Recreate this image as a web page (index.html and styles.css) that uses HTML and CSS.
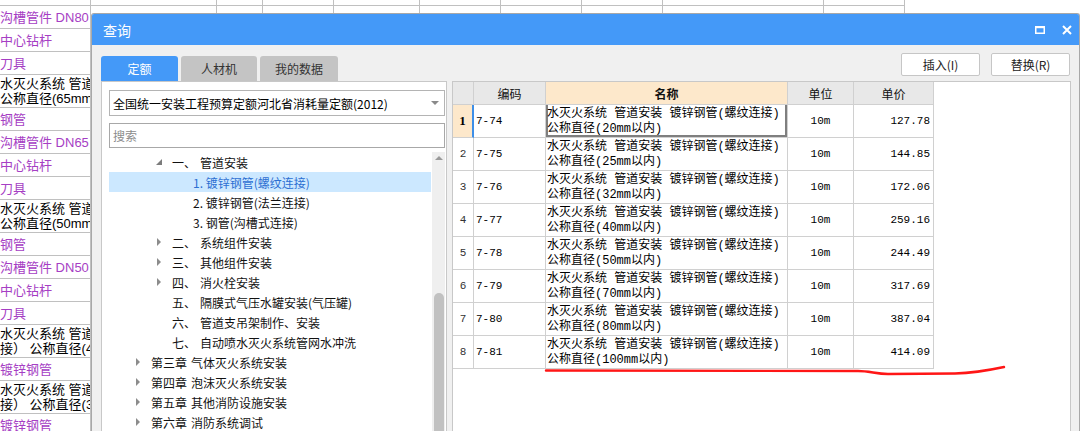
FILE: index.html
```html
<!DOCTYPE html>
<html lang="zh-CN">
<head>
<meta charset="utf-8">
<title>查询</title>
<link rel="stylesheet" href="styles.css">
</head>
<body>
<div class="sheet">
  <div class="namecol">
    <div class="srow top"></div>
    <div class="srow one purple"><span>沟槽管件 DN80</span></div>
    <div class="srow one purple"><span>中心钻杆</span></div>
    <div class="srow one purple"><span>刀具</span></div>
    <div class="srow two"><span>水灭火系统 管道安</span><span>公称直径(65mm以</span></div>
    <div class="srow one purple"><span>钢管</span></div>
    <div class="srow one purple"><span>沟槽管件 DN65</span></div>
    <div class="srow one purple"><span>中心钻杆</span></div>
    <div class="srow one purple"><span>刀具</span></div>
    <div class="srow two"><span>水灭火系统 管道安</span><span>公称直径(50mm以</span></div>
    <div class="srow one purple"><span>钢管</span></div>
    <div class="srow one purple"><span>沟槽管件 DN50</span></div>
    <div class="srow one purple"><span>中心钻杆</span></div>
    <div class="srow one purple"><span>刀具</span></div>
    <div class="srow two"><span>水灭火系统 管道安</span><span>接） 公称直径(40m</span></div>
    <div class="srow one purple"><span>镀锌钢管</span></div>
    <div class="srow two"><span>水灭火系统 管道安</span><span>接） 公称直径(32m</span></div>
    <div class="srow one purple"><span>镀锌钢管</span></div>
  </div>
  <div class="gcol g1"><div class="gtop"></div></div>
  <div class="gcol g2"><div class="gtop"></div></div>
  <div class="gcol g3"><div class="gtop"></div></div>
  <div class="gcol g4"><div class="gtop"></div></div>
  <div class="gcol g5"><div class="gtop"></div></div>
  <div class="gcol g6"><div class="gtop"></div></div>
  <div class="gcol g7"><div class="gtop"></div></div>
  <div class="gcol g8"><div class="gtop"></div></div>
  <div class="gcol g9"><div class="gtop"></div></div>
</div>

<div class="dialog">
  <div class="titlebar">
    <span class="title">查询</span>
    <div class="win-btns">
      <svg class="ico-max" width="10" height="8" viewBox="0 0 10 8"><rect x="0.75" y="1" width="8.5" height="6.25" fill="none" stroke="#fff" stroke-width="1.5"/><rect x="0" y="0" width="10" height="2.2" fill="#fff"/></svg>
      <svg class="ico-close" width="10" height="10" viewBox="0 0 10 10"><path d="M1 1L9 9M9 1L1 9" stroke="#fff" stroke-width="2" fill="none"/></svg>
    </div>
  </div>
  <div class="dlg-body">
    <div class="toprow">
      <div class="tabs">
        <div class="tab active t1">定额</div>
        <div class="tab t2">人材机</div>
        <div class="tab t3">我的数据</div>
      </div>
      <div class="actions">
        <button class="btn">插入(I)</button>
        <button class="btn">替换(R)</button>
      </div>
    </div>
    <div class="panels">
      <div class="left-panel">
        <div class="combo"><span>全国统一安装工程预算定额河北省消耗量定额(2012)</span><i class="combo-arrow"></i></div>
        <div class="search">搜索</div>
        <div class="tree-wrap">
          <div class="tree">
            <div class="node l2"><i class="tw open"></i><span class="num">一、</span>管道安装</div>
            <div class="node l3 sel">1. 镀锌钢管(螺纹连接)</div>
            <div class="node l3">2. 镀锌钢管(法兰连接)</div>
            <div class="node l3">3. 钢管(沟槽式连接)</div>
            <div class="node l2"><i class="tw closed"></i><span class="num">二、</span>系统组件安装</div>
            <div class="node l2"><i class="tw closed"></i><span class="num">三、</span>其他组件安装</div>
            <div class="node l2"><i class="tw closed"></i><span class="num">四、</span>消火栓安装</div>
            <div class="node l2"><i class="tw"></i><span class="num">五、</span>隔膜式气压水罐安装(气压罐)</div>
            <div class="node l2"><i class="tw"></i><span class="num">六、</span>管道支吊架制作、安装</div>
            <div class="node l2"><i class="tw"></i><span class="num">七、</span>自动喷水灭火系统管网水冲洗</div>
            <div class="node l1"><i class="tw closed"></i><span class="chap">第三章</span>气体灭火系统安装</div>
            <div class="node l1"><i class="tw closed"></i><span class="chap">第四章</span>泡沫灭火系统安装</div>
            <div class="node l1"><i class="tw closed"></i><span class="chap">第五章</span>其他消防设施安装</div>
            <div class="node l1"><i class="tw closed"></i><span class="chap">第六章</span>消防系统调试</div>
          </div>
          <div class="vscroll"><i class="up"></i><div class="thumb"></div></div>
        </div>
      </div>
      <div class="right-panel">
        <div class="grid">
          <div class="grow ghead">
            <div></div>
            <div>编码</div>
            <div class="hname">名称</div>
            <div>单位</div>
            <div>单价</div>
          </div>
          <div class="grow gdata current">
            <div class="rn">1</div>
            <div class="code">7-74</div>
            <div class="name"><span>水灭火系统 管道安装 镀锌钢管(螺纹连接)</span><span>公称直径(20mm以内)</span></div>
            <div class="unit">10m</div>
            <div class="price">127.78</div>
          </div>
          <div class="grow gdata">
            <div class="rn">2</div>
            <div class="code">7-75</div>
            <div class="name"><span>水灭火系统 管道安装 镀锌钢管(螺纹连接)</span><span>公称直径(25mm以内)</span></div>
            <div class="unit">10m</div>
            <div class="price">144.85</div>
          </div>
          <div class="grow gdata">
            <div class="rn">3</div>
            <div class="code">7-76</div>
            <div class="name"><span>水灭火系统 管道安装 镀锌钢管(螺纹连接)</span><span>公称直径(32mm以内)</span></div>
            <div class="unit">10m</div>
            <div class="price">172.06</div>
          </div>
          <div class="grow gdata">
            <div class="rn">4</div>
            <div class="code">7-77</div>
            <div class="name"><span>水灭火系统 管道安装 镀锌钢管(螺纹连接)</span><span>公称直径(40mm以内)</span></div>
            <div class="unit">10m</div>
            <div class="price">259.16</div>
          </div>
          <div class="grow gdata">
            <div class="rn">5</div>
            <div class="code">7-78</div>
            <div class="name"><span>水灭火系统 管道安装 镀锌钢管(螺纹连接)</span><span>公称直径(50mm以内)</span></div>
            <div class="unit">10m</div>
            <div class="price">244.49</div>
          </div>
          <div class="grow gdata">
            <div class="rn">6</div>
            <div class="code">7-79</div>
            <div class="name"><span>水灭火系统 管道安装 镀锌钢管(螺纹连接)</span><span>公称直径(70mm以内)</span></div>
            <div class="unit">10m</div>
            <div class="price">317.69</div>
          </div>
          <div class="grow gdata">
            <div class="rn">7</div>
            <div class="code">7-80</div>
            <div class="name"><span>水灭火系统 管道安装 镀锌钢管(螺纹连接)</span><span>公称直径(80mm以内)</span></div>
            <div class="unit">10m</div>
            <div class="price">387.04</div>
          </div>
          <div class="grow gdata">
            <div class="rn">8</div>
            <div class="code">7-81</div>
            <div class="name"><span>水灭火系统 管道安装 镀锌钢管(螺纹连接)</span><span>公称直径(100mm以内)</span></div>
            <div class="unit">10m</div>
            <div class="price">414.09</div>
          </div>
        </div>
      </div>
    </div>
  </div>
</div>

<svg class="redline" width="1082" height="431" viewBox="0 0 1082 431">
  <path d="M546 370.5 L858 371 C870 371 876 374 888 374 L955 373.5 C975 373 990 370 1004 367" fill="none" stroke="#ff1616" stroke-width="2.4" stroke-linecap="round"/>
</svg>
</body>
</html>
```

FILE: styles.css
```css
* { box-sizing: border-box; }
html, body { margin: 0; padding: 0; }
body {
  width: 1082px;
  height: 431px;
  overflow: hidden;
  position: relative;
  background: #fff;
  font-family: "Noto Sans CJK SC", "Noto Sans", sans-serif;
  font-size: 12px;
  color: #000;
}

/* background spreadsheet */
.sheet { display: flex; align-items: stretch; height: 431px; }
.namecol { width: 91px; border-right: 1px solid #c0c0c0; }
.srow {
  border-bottom: 1px solid #c0c0c0;
  display: flex;
  flex-direction: column;
  justify-content: center;
  overflow: hidden;
  white-space: nowrap;
  font-family: "Liberation Sans", "Noto Sans CJK SC", sans-serif;
  font-size: 13px;
  line-height: 15px;
}
.srow.top { height: 6px; }
.srow.one { height: 23px; }
.srow.two { height: 33px; }
.purple { color: #a63ec4; }
.gcol { border-right: 1px solid #c0c0c0; }
.gtop { height: 6px; border-bottom: 1px solid #c0c0c0; }
.g1 { width: 126px; }
.g2 { width: 46px; }
.g3 { width: 71px; }
.g4 { width: 86px; }
.g5 { width: 81px; }
.g6 { width: 81px; }
.g7 { width: 81px; }
.g8 { width: 161px; }
.g9 { width: 81px; }

/* dialog window */
.dialog {
  position: absolute;
  left: 91px;
  top: 13px;
  width: 989px;
  height: 420px;
  border: 1px solid #a8a8a8;
  border-bottom: none;
  border-radius: 3px 3px 0 0;
  background: #f0f0f0;
  display: flex;
  flex-direction: column;
  overflow: hidden;
}
.titlebar {
  height: 31px;
  flex: none;
  background: #4499f8;
  color: #fff;
  display: flex;
  align-items: center;
  justify-content: space-between;
  padding: 0 7px 0 11px;
}
.title { font-size: 14px; }
.win-btns { display: flex; align-items: center; gap: 17px; }
.win-btns svg { display: block; }

.dlg-body {
  flex: 1;
  display: flex;
  flex-direction: column;
  padding: 8px 8px 0 9px;
}
.toprow {
  height: 28px;
  display: flex;
  justify-content: space-between;
  align-items: flex-end;
}
.tabs { display: flex; gap: 3px; }
.tab {
  height: 25px;
  display: flex;
  align-items: center;
  justify-content: center;
  background: #c4c4c4;
  color: #333;
  border-radius: 3px 3px 0 0;
}
.t1 { width: 77px; }
.t2 { width: 76px; }
.t3 { width: 78px; }
.tab.active { background: #4499f8; color: #fff; }

.actions { display: flex; gap: 11px; margin: 0 1px 5px 0; align-self: flex-start; }
.btn {
  width: 79px;
  height: 23px;
  background: #fff;
  border: 1px solid #c6c6c6;
  border-radius: 2px;
  font-family: "Noto Sans CJK SC", sans-serif;
  font-size: 12px;
  color: #222;
  padding: 0;
}

.panels { flex: 1; display: flex; gap: 5px; }
.left-panel {
  width: 346px;
  background: #fff;
  border: 1px solid #c8c8c8;
  border-bottom: none;
  padding: 8px 0 0 7px;
  display: flex;
  flex-direction: column;
}
.combo {
  width: 336px;
  height: 26px;
  border: 1px solid #b4b4b4;
  display: flex;
  align-items: center;
  justify-content: space-between;
  padding: 0 5px 0 3px;
  white-space: nowrap;
}
.combo-arrow {
  width: 0; height: 0;
  border-left: 4px solid transparent;
  border-right: 4px solid transparent;
  border-top: 4px solid #8a8a8a;
}
.search {
  width: 336px;
  height: 25px;
  margin-top: 7px;
  border: 1px solid #a8a8a8;
  color: #8c8c8c;
  display: flex;
  align-items: center;
  padding-left: 3px;
}
.tree-wrap { flex: 1; display: flex; margin-top: 4px; }
.tree { width: 322px; }
.vscroll {
  width: 13px;
  margin-left: 1px;
  background: #efefef;
  display: flex;
  flex-direction: column;
  align-items: center;
}
.vscroll .up {
  margin-top: 4px;
  width: 0; height: 0;
  border-left: 4px solid transparent;
  border-right: 4px solid transparent;
  border-bottom: 4px solid #9a9a9a;
}
.vscroll .thumb {
  margin-top: 133px;
  width: 10px;
  flex: 1;
  background: #c1c1c1;
  border-radius: 5px 5px 0 0;
}

.node {
  height: 20px;
  display: flex;
  align-items: center;
  white-space: nowrap;
  color: #111;
}
.node.l1 { padding-left: 26px; }
.node.l2 { padding-left: 47px; }
.node.l3 { padding-left: 84px; }
.node.sel { background: #cce8ff; color: #2d6fd2; }
.tw { width: 16px; height: 20px; flex: none; position: relative; }
.tw.closed::before {
  content: "";
  position: absolute;
  left: 1px; top: 6px;
  border-top: 4px solid transparent;
  border-bottom: 4px solid transparent;
  border-left: 4px solid #8c8c8c;
}
.tw.open::before {
  content: "";
  position: absolute;
  left: 0px; top: 7px;
  border-left: 6px solid transparent;
  border-bottom: 6px solid #7c7c7c;
}
.num { display: inline-block; width: 28px; }
.chap { margin-right: 4px; }

.right-panel {
  width: 619px;
  background: #fff;
  border: 1px solid #c8c8c8;
  border-bottom: none;
}
.grid {
  font-family: "Liberation Mono", "Noto Sans CJK SC", monospace;
  font-size: 12px;
}
.grow { display: grid; grid-template-columns: 21px 72px 242px 66px 80px; }
.grow > div {
  border-right: 1px solid #d0d0d0;
  border-bottom: 1px solid #d0d0d0;
  display: flex;
  align-items: center;
  white-space: nowrap;
  overflow: hidden;
}
.ghead { height: 23px; }
.ghead > div {
  background: #e8e8e8;
  justify-content: center;
  font-family: "Noto Sans CJK SC", sans-serif;
  color: #111;
}
.ghead > .hname { background: #fde8cb; font-weight: bold; }
.gdata { height: 33px; }
.gdata .rn { justify-content: center; color: #333; font-size: 11px; }
.gdata .code { padding-left: 2px; font-size: 11px; }
.gdata .name {
  flex-direction: column;
  align-items: flex-start;
  justify-content: flex-start;
  padding: 2px 0 0 1px;
  line-height: 15px;
}
.gdata .unit { justify-content: center; font-size: 11px; }
.gdata .price { justify-content: flex-end; padding-right: 3px; font-size: 11px; }

.current .rn {
  background: #fde8cb;
  font-family: "Liberation Serif", serif;
  font-weight: bold;
  font-size: 13px;
  color: #000;
  border-right: 2px solid #3d8fe8;
}
.current .name {
  box-shadow: inset 2px 0 #7f7f7f, inset -2px 0 #7f7f7f, inset 0 -2px #7f7f7f;
}

.redline {
  position: absolute;
  left: 0;
  top: 0;
  pointer-events: none;
}
```
